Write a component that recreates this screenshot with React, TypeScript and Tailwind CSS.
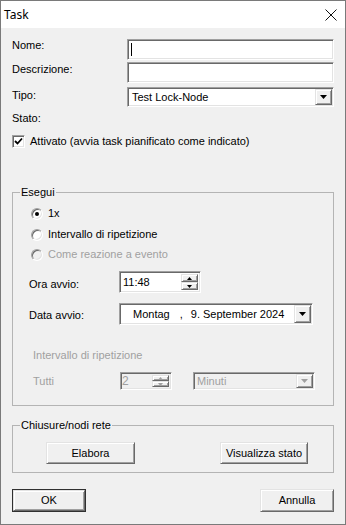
import React from 'react';

// Windows classic 3D edges
const sunken =
  "border border-t-[#a0a0a0] border-l-[#a0a0a0] border-r-white border-b-white shadow-[inset_1px_1px_0_#696969,inset_-1px_-1px_0_#e3e3e3]";
const raised =
  "bg-[#f0f0f0] border border-t-[#e3e3e3] border-l-[#e3e3e3] border-r-[#696969] border-b-[#696969] shadow-[inset_1px_1px_0_#fff,inset_-1px_-1px_0_#a0a0a0]";

const Arrow = ({ disabled }: { disabled?: boolean }) => (
  <svg width="7" height="4" viewBox="0 0 7 4">
    <path d="M0 0h7L3.5 4z" fill={disabled ? "#a0a0a0" : "#000"} />
  </svg>
);

const DropButton = ({ disabled }: { disabled?: boolean }) => (
  <div className={`${raised} w-[17px] h-full flex items-center justify-center`}>
    <Arrow disabled={disabled} />
  </div>
);

const Spin = ({ disabled }: { disabled?: boolean }) => {
  const c = disabled ? "#a0a0a0" : "#000";
  return (
    <div className="flex flex-col w-[17px] h-full">
      <div className={`${raised} flex-1 flex items-center justify-center`}>
        <svg width="5" height="3" viewBox="0 0 5 3">
          <path d="M2.5 0L5 3H0z" fill={c} />
        </svg>
      </div>
      <div className={`${raised} flex-1 flex items-center justify-center`}>
        <svg width="5" height="3" viewBox="0 0 5 3">
          <path d="M0 0h5L2.5 3z" fill={c} />
        </svg>
      </div>
    </div>
  );
};

const Radio = ({ checked, disabled, label }: { checked?: boolean; disabled?: boolean; label: string }) => (
  <div className="flex items-center h-[13px]">
    <div
      className={`w-[12px] h-[12px] rounded-full ${sunken} ${disabled ? "bg-[#f0f0f0]" : "bg-white"} flex items-center justify-center`}
    >
      {checked && <div className="w-[4px] h-[4px] rounded-full bg-black" />}
    </div>
    <span className={`ml-[5px] leading-[13px] ${disabled ? "text-[#a0a0a0]" : ""}`}>{label}</span>
  </div>
);

const Button = ({ label, def, className }: { label: string; def?: boolean; className?: string }) => (
  <div className={`${def ? "border border-[#303030]" : ""} ${className ?? ""}`}>
    <div className={`${raised} h-full flex items-center justify-center`}>{label}</div>
  </div>
);

const Group = ({ title, children, className }: { title: string; children: React.ReactNode; className?: string }) => (
  <div className={`relative border border-[#b4b4b4] ${className ?? ""}`}>
    <span className="absolute -top-[7px] left-[7px] px-[1px] bg-[#f0f0f0] leading-[13px]">{title}</span>
    {children}
  </div>
);

export default function App() {
  return (
    <div className="w-[346px] h-[525px] bg-[#f0f0f0] border border-[#7a7a7a] flex flex-col font-['Liberation_Sans',Arial,sans-serif] text-[11px] text-black">
      {/* Title bar */}
      <div className="h-[27px] bg-white flex items-center justify-between pl-[3px] pr-[8px] shrink-0">
        <span className="text-[12px] font-['Noto_Sans','Liberation_Sans',sans-serif]">Task</span>
        <svg width="12" height="12" viewBox="0 0 12 12">
          <path d="M0.5 0.5l11 11M11.5 0.5l-11 11" stroke="#111" strokeWidth="1" />
        </svg>
      </div>

      <div className="flex-1 px-[11px] pt-[11px]">
        {/* Nome */}
        <div className="flex items-start h-[21px]">
          <span className="w-[115px] leading-[12px] mt-[0px]">Nome:</span>
          <div className={`flex-1 h-full bg-white ${sunken} flex items-center pl-[3px]`}>
            <div className="w-px h-[13px] bg-black" />
          </div>
        </div>
        {/* Descrizione */}
        <div className="flex items-start h-[21px] mt-[2px]">
          <span className="w-[115px] leading-[12px] mt-[1px]">Descrizione:</span>
          <div className={`flex-1 h-full bg-white ${sunken}`} />
        </div>
        {/* Tipo */}
        <div className="flex items-start h-[20px] mt-[4px]">
          <span className="w-[115px] leading-[12px] mt-[2px]">Tipo:</span>
          <div className={`flex-1 h-full bg-white ${sunken} flex items-stretch p-px`}>
            <span className="flex-1 pl-[3px] flex items-center">Test Lock-Node</span>
            <DropButton />
          </div>
        </div>
        {/* Stato */}
        <div className="mt-[5px] leading-[12px]">Stato:</div>
        {/* Attivato */}
        <div className="flex items-center mt-[11px] h-[13px]">
          <div className={`w-[13px] h-[13px] bg-white ${sunken} flex items-center justify-center`}>
            <svg width="9" height="9" viewBox="0 0 9 9">
              <path d="M1 4l2.5 2.5L8 1.5" stroke="#000" strokeWidth="1.8" fill="none" />
            </svg>
          </div>
          <span className="ml-[5px] leading-[13px]">Attivato (avvia task pianificato come indicato)</span>
        </div>

        {/* Esegui */}
        <Group title="Esegui" className="mt-[44px] pt-[14px] pb-[15px]">
          <div className="pl-[18px] flex flex-col">
            <Radio checked label="1x" />
            <div className="mt-[8px]">
              <Radio label="Intervallo di ripetizione" />
            </div>
            <div className="mt-[7px]">
              <Radio disabled label="Come reazione a evento" />
            </div>
          </div>

          <div className="flex items-start h-[22px] mt-[10px] pl-[16px]">
            <span className="w-[90px] leading-[13px] mt-[7px]">Ora avvio:</span>
            <div className={`w-[82px] h-full bg-white ${sunken} flex items-stretch p-px`}>
              <span className="flex-1 pl-[2px] flex items-center">11:48</span>
              <div className="py-[1px] pr-[1px]">
                <Spin />
              </div>
            </div>
          </div>

          <div className="flex items-start h-[22px] mt-[10px] pl-[16px]">
            <span className="w-[90px] leading-[13px] mt-[6px]">Data avvio:</span>
            <div className={`w-[194px] h-full bg-white ${sunken} flex items-stretch p-px`}>
              <span className="flex-1 flex items-center whitespace-nowrap">
                <span className="ml-[12px]">Montag</span>
                <span className="ml-[10px]">,</span>
                <span className="ml-[8px]">9. September 2024</span>
              </span>
              <DropButton />
            </div>
          </div>

          <div className="mt-[24px] pl-[20px] leading-[13px] text-[#a0a0a0]">Intervallo di ripetizione</div>

          <div className="flex items-start h-[18px] mt-[10px] pl-[20px] text-[#a0a0a0]">
            <span className="w-[87px] leading-[13px] mt-[3px]">Tutti</span>
            <div className={`w-[52px] h-full bg-[#f0f0f0] ${sunken} flex items-stretch p-px`}>
              <span className="flex-1 flex items-center text-[12px]">2</span>
              <div className="py-[1px] pr-[1px]">
                <Spin disabled />
              </div>
            </div>
            <div className={`ml-[21px] w-[122px] h-full bg-[#f0f0f0] ${sunken} flex items-stretch p-px`}>
              <span className="flex-1 pl-[2px] flex items-center">Minuti</span>
              <DropButton disabled />
            </div>
          </div>
        </Group>

        {/* Chiusure/nodi rete */}
        <Group title="Chiusure/nodi rete" className="mt-[19px] pt-[16px] pb-[8px]">
          <div className="flex justify-between pl-[33px] pr-[25px]">
            <Button label="Elabora" className="w-[89px] h-[22px]" />
            <Button label="Visualizza stato" className="w-[88px] h-[22px]" />
          </div>
        </Group>

        {/* Footer */}
        <div className="flex justify-between mt-[16px]">
          <Button label="OK" def className="w-[74px] h-[23px]" />
          <Button label="Annulla" className="w-[74px] h-[23px]" />
        </div>
      </div>
    </div>
  );
}
